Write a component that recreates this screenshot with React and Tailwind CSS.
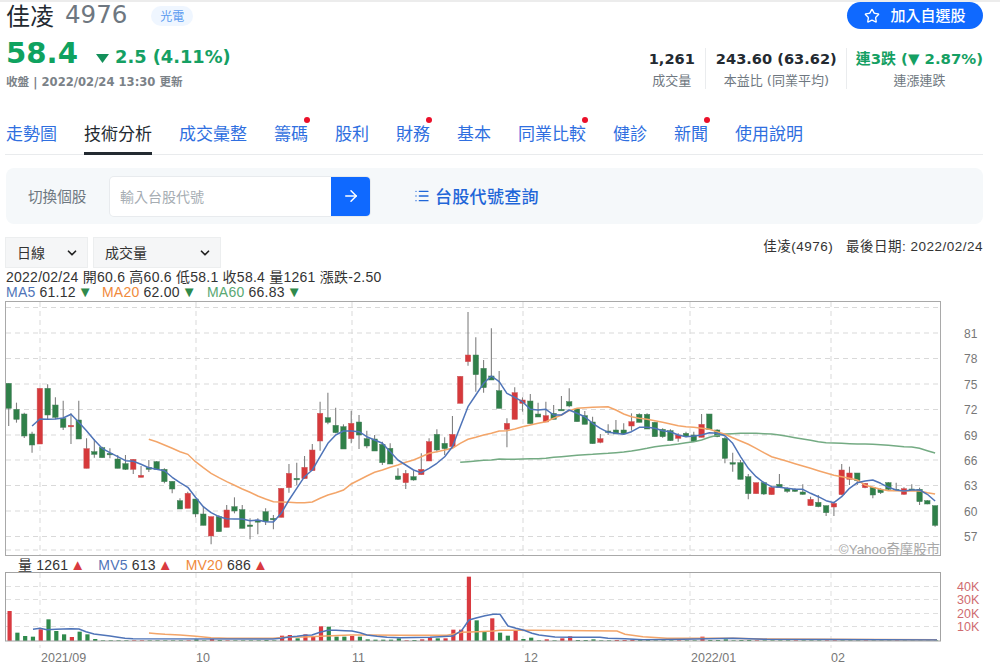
import { ArrowRight, ChevronDown, List, Star } from 'lucide-react'

const UI_FONT = "font-['DejaVu_Sans','Noto_Sans_CJK_TC',sans-serif]"
const CJK_FONT = "font-['Noto_Sans_CJK_TC',sans-serif]"
const CHART_FONT = "font-['Liberation_Sans','Noto_Sans_CJK_TC',sans-serif]"

const TABS = [
  { label: '走勢圖' },
  { label: '技術分析', active: true },
  { label: '成交彙整' },
  { label: '籌碼', dot: true },
  { label: '股利' },
  { label: '財務', dot: true },
  { label: '基本' },
  { label: '同業比較', dot: true },
  { label: '健診' },
  { label: '新聞', dot: true },
  { label: '使用說明' },
]

// Series below are stored in plot units: 3 units = 1px, with 0 at the top of the panel.
// [bodyTop, bodyBottom, wickTop, wickBottom, up]
const CANDLES = [
  [250, 325, 250, 378, 0], [328, 358, 308, 368, 0], [342, 408, 338, 414, 0], [402, 435, 395, 458, 0],
  [265, 432, 265, 432, 1], [265, 345, 253, 360, 0], [315, 352, 292, 358, 0], [355, 382, 302, 390, 0],
  [376, 380, 340, 432, 1], [360, 417, 302, 417, 0], [446, 505, 415, 505, 1], [455, 463, 418, 473, 0],
  [443, 473, 440, 473, 0], [460, 463, 445, 475, 0], [477, 505, 465, 505, 0], [491, 508, 465, 510, 0],
  [478, 508, 478, 522, 1], [526, 532, 498, 532, 1], [502, 508, 480, 516, 0], [485, 508, 483, 510, 0],
  [508, 545, 505, 550, 0], [544, 567, 544, 580, 0], [602, 627, 595, 627, 0], [580, 625, 575, 625, 1],
  [597, 642, 597, 652, 0], [642, 676, 620, 676, 0], [650, 708, 650, 733, 1], [650, 695, 645, 695, 0],
  [630, 682, 615, 682, 1], [620, 633, 592, 640, 0], [629, 685, 615, 685, 0], [675, 679, 655, 718, 0],
  [662, 665, 655, 703, 0], [635, 665, 625, 675, 0], [655, 659, 645, 688, 0], [565, 652, 565, 652, 1],
  [520, 563, 492, 578, 1], [535, 539, 488, 555, 0], [502, 536, 468, 536, 1], [450, 512, 432, 512, 1],
  [340, 423, 305, 452, 1], [353, 367, 278, 373, 0], [376, 398, 323, 400, 0], [380, 447, 373, 447, 0],
  [370, 416, 332, 430, 1], [366, 405, 345, 447, 0], [416, 438, 392, 445, 0], [417, 453, 405, 453, 0],
  [433, 488, 425, 495, 0], [445, 492, 430, 492, 0], [528, 538, 505, 540, 0], [520, 548, 510, 567, 1],
  [530, 540, 512, 542, 0], [508, 524, 460, 524, 1], [425, 483, 415, 483, 1], [403, 450, 388, 457, 0],
  [430, 446, 412, 465, 0], [403, 440, 348, 445, 1], [229, 310, 229, 310, 1], [165, 185, 36, 197, 1],
  [165, 224, 112, 275, 0], [205, 263, 180, 278, 0], [228, 240, 85, 240, 0], [272, 325, 213, 325, 0],
  [370, 388, 355, 442, 1], [278, 358, 262, 358, 1], [300, 310, 292, 335, 1], [303, 371, 282, 371, 0],
  [342, 351, 308, 351, 0], [347, 366, 305, 366, 1], [340, 358, 315, 358, 0], [328, 331, 288, 331, 0],
  [305, 318, 265, 322, 0], [327, 365, 325, 365, 0], [347, 373, 333, 373, 0], [366, 431, 350, 431, 0],
  [416, 427, 402, 430, 1], [393, 397, 373, 405, 0], [390, 402, 360, 402, 0], [390, 402, 370, 404, 0],
  [365, 378, 340, 392, 1], [343, 367, 340, 367, 0], [343, 387, 340, 387, 0], [367, 410, 365, 410, 0],
  [388, 410, 385, 413, 0], [392, 422, 388, 423, 0], [405, 415, 400, 425, 1], [400, 408, 395, 412, 0],
  [405, 425, 395, 425, 0], [373, 412, 342, 412, 1], [342, 388, 342, 390, 0], [390, 410, 388, 412, 0],
  [415, 475, 410, 490, 0], [488, 492, 458, 515, 0], [488, 538, 480, 538, 0], [530, 581, 522, 598, 0],
  [548, 581, 548, 581, 1], [548, 582, 545, 585, 0], [562, 584, 562, 584, 1], [553, 562, 522, 562, 0],
  [565, 574, 562, 578, 0], [568, 574, 565, 576, 0], [576, 583, 553, 584, 0], [598, 617, 590, 617, 1],
  [607, 620, 585, 622, 0], [617, 638, 617, 648, 0], [610, 621, 605, 648, 1], [510, 584, 492, 586, 1],
  [519, 538, 500, 555, 1], [519, 542, 519, 555, 0], [550, 563, 550, 565, 1], [562, 585, 560, 595, 0],
  [568, 578, 565, 582, 0], [548, 568, 546, 570, 0], [568, 571, 548, 572, 0], [566, 583, 562, 584, 1],
  [567, 570, 553, 571, 0], [568, 605, 563, 615, 0], [602, 612, 600, 613, 0], [617, 676, 617, 680, 0],
]

const MA5 = [
  378, 357, 358, 357, 354, 343, 367, 392, 420, 445, 458, 470, 482, 484, 493, 503, 508, 512, 532, 548,
  562, 592, 620, 638, 650, 656, 657, 657, 662, 660, 665, 666, 640, 600, 565, 530, 510, 470, 430, 405,
  393, 393, 395, 410, 420, 430, 455, 480, 495, 510, 518, 505, 490, 470, 440, 380, 320, 285, 250, 228,
  245, 280, 292, 305, 328, 330, 328, 345, 345, 330, 340, 350, 370, 385, 397, 400, 403, 395, 382, 382,
  385, 392, 395, 405, 410, 408, 405, 398, 400, 407, 430, 470, 505, 530, 548, 560, 562, 565, 568, 568,
  580, 590, 602, 608, 590, 565, 548, 543, 540, 550, 562, 570, 573, 570, 570, 583, 603,
]

const MA20 = [
  418, 425, 435, 445, 455, 463, 485, 503, 520, 533, 545, 556, 567, 577, 588, 597, 605, 606, 607, 608,
  608, 606, 595, 585, 578, 570, 552, 540, 528, 517, 510, 502, 495, 487, 480, 470, 460, 455, 450, 445,
  430, 418, 412, 405, 400, 393, 392, 387, 380, 375, 370, 365, 355, 345, 332, 325, 323, 322, 321, 320,
  330, 342, 350, 355, 358, 362, 367, 372, 377, 380, 382, 385, 388, 395, 403, 413, 423, 433, 445, 458,
  470, 477, 484, 491, 498, 505, 512, 519, 526, 530, 535, 540, 555, 562, 568, 572, 572, 573, 572, 573,
  578, 582,
]

const MA60 = [
  487, 485, 483, 481, 480, 477, 478, 478, 477, 476, 476, 475, 472, 470, 468, 466, 464, 463, 461, 460,
  458, 456, 453, 449, 445, 440, 437, 435, 432, 428, 425, 420, 412, 406, 402, 401, 400, 400, 400, 401,
  402, 405, 409, 413, 417, 421, 425, 428, 429, 430, 431, 432, 432, 433, 434, 436, 438, 440, 441, 445,
  452, 459,
]

// Volume per session, positive for up days and negative for down days
const VOLUMES = [
  90, -25, -15, -13, 35, -65, -30, -20, 12, -28, -20, -6, -2, -2, -2, -2, 2, 2, -2, -2,
  -2, -2, -2, 2, -5, -2, 6, -3, 2, -2, -2, -2, -2, -3, -2, 16, 18, -8, 20, 14,
  44, -43, -13, -13, 15, -13, -5, -4, -4, -4, -8, 2, -3, 5, 10, -8, 8, 34, 34, 193,
  -62, -27, 68, -25, -16, 30, -6, -10, -2, 5, -2, 8, 14, -3, -3, -5, -2, -2, 3, 3,
  4, -3, -3, -2, -2, -2, 2, -2, -2, 13, -3, -3, -5, -2, -3, -3, 2, -2, -2, -2,
  -2, 2, -2, -2, -2, 2, 2, -2, -2, -2, 2, -2, -2, -2, 2, -2, -2, -2, -2, -2,
]

// Volume averages as [x, y] pairs, x in px and y in plot units
const MV5 = [
  [33, 223], [40, 220], [47, 224], [56, 223], [63, 222], [71, 221], [79, 222], [86, 230], [94, 237], [102, 240],
  [110, 243], [118, 247], [125, 250], [133, 251], [273, 252], [281, 250], [289, 246], [297, 244], [305, 241],
  [312, 240], [320, 232], [328, 226], [336, 226], [345, 227], [352, 228], [360, 233], [367, 240], [377, 244],
  [387, 247], [400, 248], [430, 247], [453, 243], [462, 225], [469, 195], [477, 188], [485, 182], [493, 178],
  [500, 178], [508, 213], [516, 220], [524, 226], [532, 235], [539, 240], [555, 246], [571, 247], [600, 247],
  [608, 250], [625, 251], [643, 254], [683, 253], [733, 250], [767, 253], [937, 255],
]

const MV20 = [
  [149, 234], [157, 236], [165, 238], [180, 240], [196, 244], [211, 248], [227, 250], [273, 250], [289, 246],
  [305, 246], [320, 244], [350, 240], [367, 240], [400, 241], [447, 241], [462, 232], [477, 230], [493, 228],
  [500, 226], [533, 226], [617, 228], [625, 238], [643, 245], [667, 250], [733, 250], [767, 252], [937, 254],
]

const MONTH_GRID = [40, 196, 352, 523, 690, 831]
const MONTH_LABELS = [[41, '2021/09'], [196, '10'], [352, '11'], [524, '12'], [691, '2022/01'], [831, '02']]
const PRICE_TICKS = [[81, 333], [78, 358.5], [75, 384], [72, 409.5], [69, 435], [66, 460], [63, 485.5], [60, 511], [57, 536.5]]
const VOLUME_TICKS = [['40K', 586.5], ['30K', 599.5], ['20K', 613.5], ['10K', 626.5]]

const candleX = (i) => 8.7 + i * 7.785
const priceY = (v) => 300 + v / 3
const volumeY = (v) => 555 + v / 3
const toLine = (values, from) => values.map((v, i) => `${candleX(from + i).toFixed(1)},${priceY(v).toFixed(1)}`).join(' ')
const toVolumeLine = (points) => points.map(([x, y]) => `${x},${volumeY(y).toFixed(1)}`).join(' ')

function PriceChart() {
  return (
    <svg className="block w-[1000px] h-[258px]" viewBox="0 300 1000 258">
      <g stroke="#d9d9d9" strokeWidth="1" strokeDasharray="5 4">
        {[307.5, ...PRICE_TICKS.map((t) => t[1]), 550].map((y) => (
          <line key={y} x1="6" x2="940" y1={y} y2={y} />
        ))}
        {MONTH_GRID.map((x) => (
          <line key={x} x1={x} x2={x} y1="302" y2="556" />
        ))}
      </g>
      {CANDLES.map(([top, bottom, wickTop, wickBottom, up], i) => {
        const x = candleX(i)
        return (
          <g key={i}>
            <line x1={x} x2={x} y1={priceY(wickTop)} y2={priceY(wickBottom)} stroke="#808080" strokeWidth="1.1" />
            <rect
              x={x - 2.7}
              y={priceY(top)}
              width="5.4"
              height={Math.max((bottom - top) / 3, 1.5)}
              fill={up ? '#d6393b' : '#2f8049'}
              stroke={up ? '#c9565a' : '#4a7f5c'}
              strokeWidth="0.5"
            />
          </g>
        )
      })}
      <polyline points={toLine(MA60, 58)} fill="none" stroke="#74ab83" strokeWidth="1.5" />
      <polyline points={toLine(MA20, 18)} fill="none" stroke="#f3a569" strokeWidth="1.5" />
      <polyline points={toLine(MA5, 3)} fill="none" stroke="#4f74b8" strokeWidth="1.5" strokeLinejoin="round" />
      <rect x="5.5" y="301.5" width="935" height="254" fill="none" stroke="#a9a9a9" />
      <text x="940" y="553.5" textAnchor="end" fontSize="13.4" fill="#a8a8a8" className={CHART_FONT}>©Yahoo奇摩股市</text>
      {PRICE_TICKS.map(([label, y]) => (
        <text key={label} x="964" y={y + 4.5} fontSize="12" fill="#777" className={CHART_FONT}>{label}</text>
      ))}
    </svg>
  )
}

function VolumeChart() {
  return (
    <svg className="block w-[1000px] h-[96px]" viewBox="0 570 1000 96">
      <g stroke="#dfdfdf" strokeWidth="1" strokeDasharray="5 4">
        {VOLUME_TICKS.map(([label, y]) => (
          <line key={label} x1="6" x2="940" y1={y} y2={y} />
        ))}
        {MONTH_GRID.map((x) => (
          <line key={x} x1={x} x2={x} y1="573" y2="648" />
        ))}
      </g>
      {VOLUMES.map((v, i) => (
        <rect
          key={i}
          x={candleX(i) - 1.2}
          y={641 - Math.abs(v) / 3}
          width="4.2"
          height={Math.abs(v) / 3}
          fill={v > 0 ? '#d93a40' : '#2f8a4c'}
        />
      ))}
      <polyline points={toVolumeLine(MV20)} fill="none" stroke="#f3a569" strokeWidth="1.5" />
      <polyline points={toVolumeLine(MV5)} fill="none" stroke="#4f74b8" strokeWidth="1.5" />
      <rect x="5.5" y="572.5" width="935" height="68.5" fill="none" stroke="#a3a3a3" />
      {VOLUME_TICKS.map(([label, y]) => (
        <text key={label} x="957" y={y + 4.5} fontSize="12.5" fill="#cf6b70" className={CHART_FONT}>{label}</text>
      ))}
      {MONTH_LABELS.map(([x, label]) => (
        <text key={label} x={x} y="661.5" fontSize="12.5" fill="#777" className={CHART_FONT}>{label}</text>
      ))}
    </svg>
  )
}

function Stat({ value, label, valueClass = 'text-[#232a31]', sizeClass = 'text-[14.6px]', dividerClass = '' }) {
  return (
    <div className={`flex flex-col items-center h-[41px] ${dividerClass}`}>
      <span className={`${sizeClass} leading-[22px] font-semibold whitespace-nowrap ${UI_FONT} ${valueClass}`}>{value}</span>
      <span className={`text-[13px] leading-[20px] mt-[1px] text-[#6e7780] whitespace-nowrap ${UI_FONT}`}>{label}</span>
    </div>
  )
}

function Select({ label, width }) {
  return (
    <div className={`flex items-center justify-between h-[31px] ${width} pl-[11px] pr-[8px] bg-[#f5f6f7] border border-[#eceeef] text-[14px] text-[#333]`}>
      <span>{label}</span>
      <ChevronDown size={14} strokeWidth={3} className="text-[#222]" />
    </div>
  )
}

function Trend({ up }) {
  return <span className={`text-[15px] leading-[14px] ml-[2px] ${up ? 'text-[#d93a40]' : 'text-[#2f8a4c]'}`}>{up ? '▲' : '▼'}</span>
}

export default function App() {
  return (
    <div className={`w-[1000px] h-[667px] overflow-hidden bg-white ${CJK_FONT}`}>
      <div className="h-[2px] bg-[#ececec]" />

      <header className="flex justify-between pl-[6px] pr-[17px]">
        <div>
          <div className="flex items-center h-[26px]">
            <span className="text-[24px] leading-[26px] text-[#232a31]">佳凌</span>
            <span className={`ml-[11px] text-[24.5px] leading-[26px] text-[#6e7780] ${UI_FONT}`}>4976</span>
            <span className="ml-[24px] mt-[2px] px-[9px] h-[20px] leading-[20px] rounded-full bg-[#eff6ff] text-[12px] text-[#5b9bf0]">光電</span>
          </div>
          <div className="flex items-baseline h-[38px] mt-[6px]">
            <span className={`text-[29.2px] leading-[38px] font-bold text-[#0fa25f] ${UI_FONT}`}>58.4</span>
            <svg className="ml-[18px]" width="13" height="9" viewBox="0 0 13 9">
              <path d="M0 0h13L6.5 9z" fill="#13905a" />
            </svg>
            <span className={`ml-[6px] text-[17.8px] font-semibold text-[#15a063] ${UI_FONT}`}>2.5 (4.11%)</span>
          </div>
          <div className={`mt-[1px] text-[11.6px] leading-[18px] font-semibold text-[#7b8288] ${UI_FONT}`}>
            收盤 | 2022/02/24 13:30 更新
          </div>
        </div>
        <div className="flex flex-col items-end">
          <button className="flex items-center justify-center gap-[10px] w-[136px] h-[27px] rounded-full bg-[#0f69ff] text-white text-[15px] font-medium">
            <Star size={16} strokeWidth={2} />
            <span>加入自選股</span>
          </button>
          <div className="flex mt-[19px]">
            <Stat value="1,261" label="成交量" dividerClass="border-r border-[#eaecee] pr-[10px] mr-[10px]" />
            <Stat value="243.60 (63.62)" label="本益比 (同業平均)" dividerClass="border-r border-[#eaecee] pr-[9px] mr-[9px]" />
            <Stat value="連3跌 (▼ 2.87%)" label="連漲連跌" sizeClass="text-[14.9px]" valueClass="text-[#15a063]" />
          </div>
        </div>
      </header>

      <nav className="flex gap-[27px] mt-[20px] ml-[5px] mr-[17px] pl-[1px] h-[44px] border-b border-[#e9ebed]">
        {TABS.map((tab) => (
          <div
            key={tab.label}
            className={`relative h-[44px] pt-[10px] text-[17px] leading-[24px] whitespace-nowrap ${tab.active ? 'text-[#232a31] border-b-[3px] border-[#232a31]' : 'text-[#2f6fe0]'}`}
          >
            {tab.label}
            {tab.dot && <span className="absolute right-[-2px] top-[6px] w-[6px] h-[6px] rounded-full bg-[#eb0f29]" />}
          </div>
        ))}
      </nav>

      <div className="flex items-center mt-[13px] ml-[6px] mr-[17px] h-[56px] pl-[22px] rounded-[8px] bg-[#f5f8fa]">
        <span className="w-[82px] text-[14.6px] text-[#6e7780]">切換個股</span>
        <div className="flex w-[260px] h-[39px] rounded-[4px] bg-white shadow-[0_0_0_1px_#e8ebee]">
          <div className="flex-1 pl-[10px] text-[14px] leading-[39px] text-[#a6adb3]">輸入台股代號</div>
          <div className="flex items-center justify-center w-[39px] rounded-r-[4px] bg-[#0f69ff] text-white">
            <ArrowRight size={18} strokeWidth={2} />
          </div>
        </div>
        <List size={16} strokeWidth={2} className="ml-[44px] text-[#1f66d8]" />
        <span className="ml-[5px] text-[17px] tracking-[0.3px] font-medium text-[#1f66d8]">台股代號查詢</span>
      </div>

      <div className="flex justify-between items-start mt-[13px] ml-[5px] mr-[17px] h-[31px]">
        <div className="flex gap-[5px]">
          <Select label="日線" width="w-[83px]" />
          <Select label="成交量" width="w-[128px]" />
        </div>
        <span className={`text-[13.5px] tracking-[0.5px] text-[#333] ${CHART_FONT}`}>佳凌(4976)&nbsp;&nbsp;&nbsp;最後日期: 2022/02/24</span>
      </div>

      <div className={`mt-[2px] pl-[6px] text-[14px] leading-[15px] tracking-[0.25px] text-[#333] ${CHART_FONT}`}>
        <div>2022/02/24 開60.6 高60.6 低58.1 收58.4 量1261 漲跌-2.50</div>
        <div className="flex">
          <span className="text-[#4f74b8]">MA5</span>
          <span className="ml-[4px]">61.12<Trend /></span>
          <span className="ml-[9px] text-[#f08a3c]">MA20</span>
          <span className="ml-[4px]">62.00<Trend /></span>
          <span className="ml-[10px] text-[#5aa873]">MA60</span>
          <span className="ml-[4px]">66.83<Trend /></span>
        </div>
      </div>

      <PriceChart />

      <div className={`flex h-[12px] pl-[18px] text-[14px] leading-[14px] tracking-[0.2px] text-[#333] ${CHART_FONT}`}>
        <span>量 1261<Trend up /></span>
        <span className="ml-[13px] text-[#4f74b8]">MV5</span>
        <span className="ml-[4px]">613<Trend up /></span>
        <span className="ml-[13px] text-[#f08a3c]">MV20</span>
        <span className="ml-[4px]">686<Trend up /></span>
      </div>

      <VolumeChart />
    </div>
  )
}
